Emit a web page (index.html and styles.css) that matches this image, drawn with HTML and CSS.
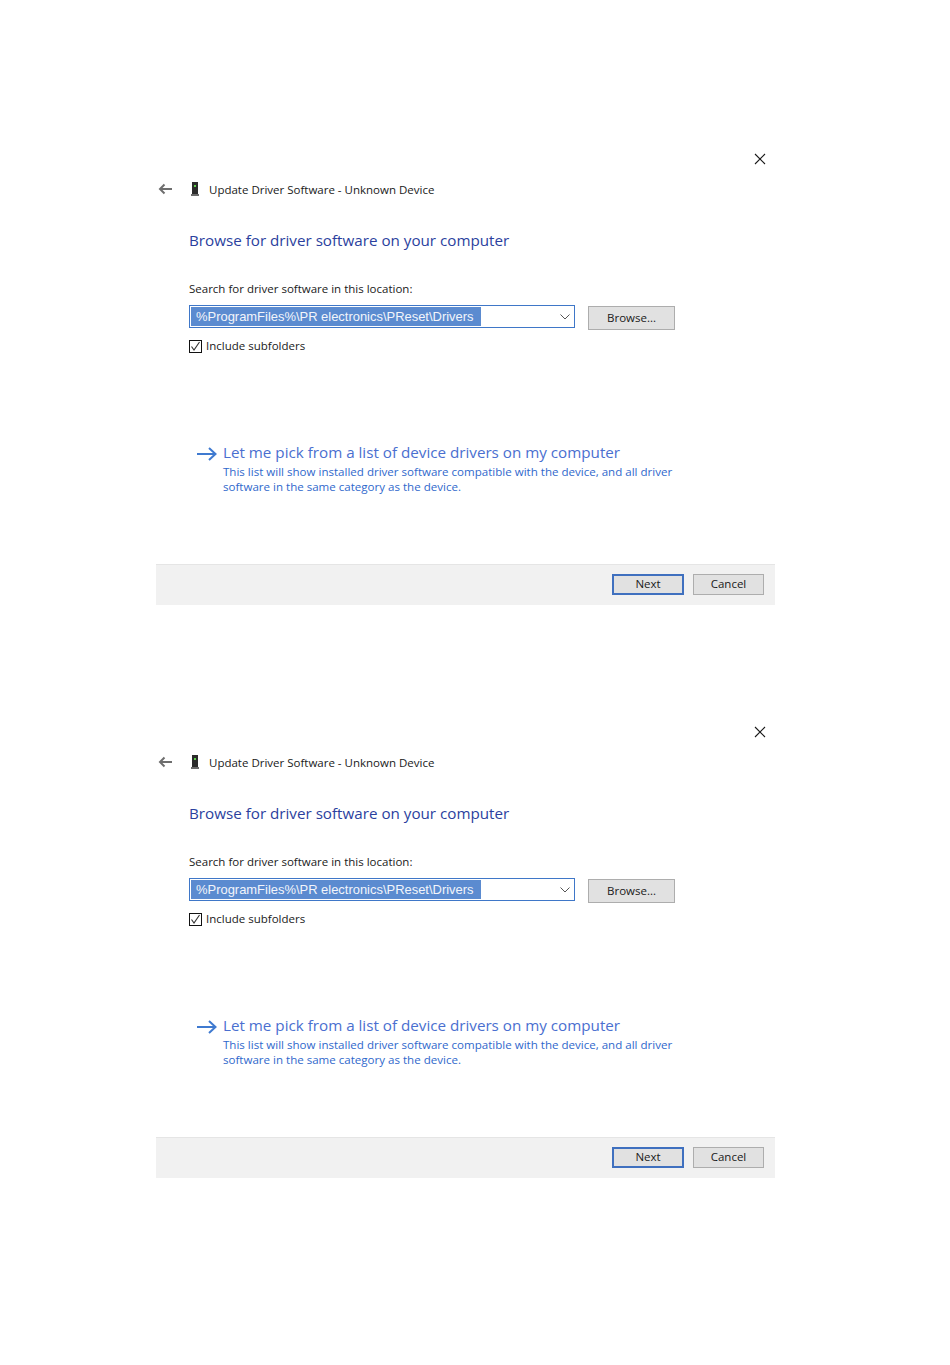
FILE: index.html
```html
<!DOCTYPE html>
<html lang="en">

<head>
    <meta charset="UTF-8">
    <title>Update Driver Software</title>
    <link rel="stylesheet" href="styles.css">
</head>

<body>
    <!-- First dialog -->
    <section class="dialog">
        <div class="close-bar">
            <svg class="close-icon" width="12" height="12" viewBox="0 0 12 12"><path d="M1 1L11 11M11 1L1 11" /></svg>
        </div>
        <div class="title-row">
            <svg class="back-icon" width="14" height="12" viewBox="0 0 14 12"><path d="M14 6H2M6.500 1.500L2 6L6.500 10.500" /></svg>
            <svg class="device-icon" width="8" height="14" viewBox="0 0 8 14">
                <rect x="1" y="0" width="6" height="12" fill="#2b2b2b" />
                <rect x="3" y="3" width="2" height="2" fill="#5fd04a" />
                <rect x="0" y="12" width="8" height="2" fill="#6b6b6b" />
            </svg>
            <span class="title-text">Update Driver Software - Unknown Device</span>
        </div>
        <h1 class="heading">Browse for driver software on your computer</h1>
        <div class="field-label">Search for driver software in this location:</div>
        <div class="field-row">
            <div class="combo">
                <span class="combo-value">%ProgramFiles%\PR electronics\PReset\Drivers</span>
                <svg class="chevron" width="10" height="6" viewBox="0 0 10 6"><path d="M0.5 0.5L5 5L9.5 0.5" /></svg>
            </div>
            <button class="btn browse">Browse...</button>
        </div>
        <label class="check-row">
            <span class="check-box">
                <svg width="11" height="11" viewBox="0 0 11 11"><path d="M1.5 5.5L4 9L9.5 1" /></svg>
            </span>
            Include subfolders
        </label>
        <div class="link-row">
            <svg class="link-arrow" width="20" height="14" viewBox="0 0 20 14"><path d="M0 7H18M12 1L18.500 7L12 13" /></svg>
            <div class="link-body">
                <div class="link-title">Let me pick from a list of device drivers on my computer</div>
                <div class="link-desc">This list will show installed driver software compatible with the device, and all driver software in the same category as the device.</div>
            </div>
        </div>
        <div class="footer">
            <button class="btn next">Next</button>
            <button class="btn cancel">Cancel</button>
        </div>
    </section>

    <!-- Second dialog, same content -->
    <section class="dialog">
        <div class="close-bar">
            <svg class="close-icon" width="12" height="12" viewBox="0 0 12 12"><path d="M1 1L11 11M11 1L1 11" /></svg>
        </div>
        <div class="title-row">
            <svg class="back-icon" width="14" height="12" viewBox="0 0 14 12"><path d="M14 6H2M6.500 1.500L2 6L6.500 10.500" /></svg>
            <svg class="device-icon" width="8" height="14" viewBox="0 0 8 14">
                <rect x="1" y="0" width="6" height="12" fill="#2b2b2b" />
                <rect x="3" y="3" width="2" height="2" fill="#5fd04a" />
                <rect x="0" y="12" width="8" height="2" fill="#6b6b6b" />
            </svg>
            <span class="title-text">Update Driver Software - Unknown Device</span>
        </div>
        <h1 class="heading">Browse for driver software on your computer</h1>
        <div class="field-label">Search for driver software in this location:</div>
        <div class="field-row">
            <div class="combo">
                <span class="combo-value">%ProgramFiles%\PR electronics\PReset\Drivers</span>
                <svg class="chevron" width="10" height="6" viewBox="0 0 10 6"><path d="M0.5 0.5L5 5L9.5 0.5" /></svg>
            </div>
            <button class="btn browse">Browse...</button>
        </div>
        <label class="check-row">
            <span class="check-box">
                <svg width="11" height="11" viewBox="0 0 11 11"><path d="M1.5 5.5L4 9L9.5 1" /></svg>
            </span>
            Include subfolders
        </label>
        <div class="link-row">
            <svg class="link-arrow" width="20" height="14" viewBox="0 0 20 14"><path d="M0 7H18M12 1L18.500 7L12 13" /></svg>
            <div class="link-body">
                <div class="link-title">Let me pick from a list of device drivers on my computer</div>
                <div class="link-desc">This list will show installed driver software compatible with the device, and all driver software in the same category as the device.</div>
            </div>
        </div>
        <div class="footer">
            <button class="btn next">Next</button>
            <button class="btn cancel">Cancel</button>
        </div>
    </section>
</body>

</html>
```

FILE: styles.css
```css
/* General Styles */
body {
    margin: 0;
    padding: 153px 0 0 156px;
    background-color: #ffffff;
    color: #1a1a1a;
    font-family: 'Open Sans', 'Noto Sans', sans-serif;
    font-size: 11.5px;
}

/* Dialog */
.dialog {
    width: 619px;
    height: 452px;
    margin-bottom: 121px;
    display: flex;
    flex-direction: column;
}

.close-bar {
    height: 12px;
    padding-right: 9px;
    display: flex;
    justify-content: flex-end;
}

.close-icon path {
    fill: none;
    stroke: #1a1a1a;
    stroke-width: 1.1;
}

/* Title row */
.title-row {
    height: 16px;
    margin-top: 16px;
    display: flex;
    align-items: center;
    line-height: 16px;
}

.back-icon {
    margin-left: 2px;
}

.back-icon path {
    fill: none;
    stroke: #6e6e6e;
    stroke-width: 2;
}

.device-icon {
    margin-left: 19px;
}

.title-text {
    margin: 1px 0 0 10px;
}

/* Heading */
.heading {
    margin: 32px 0 0 33px;
    font-size: 15.2px;
    font-weight: 400;
    line-height: 22px;
    color: #2b3f9e;
}

/* Location field */
.field-label {
    margin: 30px 0 0 33px;
    line-height: 16px;
}

.field-row {
    margin: 8px 0 0 33px;
    display: flex;
    align-items: flex-start;
}

.combo {
    width: 386px;
    height: 23px;
    box-sizing: border-box;
    border: 1px solid #3f77c8;
    padding: 1px;
    display: flex;
    align-items: center;
    justify-content: space-between;
}

.combo-value {
    width: 290px;
    height: 19px;
    box-sizing: border-box;
    padding-left: 5px;
    background-color: #5b8bd0;
    color: #f2f5fb;
    font-family: 'Liberation Sans', sans-serif;
    font-size: 12.95px;
    line-height: 19px;
    white-space: nowrap;
}

.chevron {
    margin-right: 3px;
}

.chevron path {
    fill: none;
    stroke: #555555;
    stroke-width: 1;
}

/* Buttons */
.btn {
    box-sizing: border-box;
    padding: 0 0 2px;
    border: 1px solid #adadad;
    background-color: #e1e1e1;
    color: #1a1a1a;
    font-family: inherit;
    font-size: 11.5px;
}

.browse {
    width: 87px;
    height: 24px;
    margin: 1px 0 0 13px;
}

/* Checkbox */
.check-row {
    margin: 9px 0 0 33px;
    height: 14px;
    display: flex;
    align-items: center;
    gap: 4px;
    line-height: 14px;
}

.check-box {
    width: 13px;
    height: 13px;
    box-sizing: border-box;
    border: 1px solid #111111;
    display: flex;
    align-items: center;
    justify-content: center;
}

.check-box path {
    fill: none;
    stroke: #333333;
    stroke-width: 1.1;
}

/* Command link */
.link-row {
    margin: 89px 0 0 41px;
    display: flex;
    gap: 6px;
}

.link-arrow {
    margin-top: 5px;
    flex-shrink: 0;
}

.link-arrow path {
    fill: none;
    stroke: #3f7ad0;
    stroke-width: 2;
}

.link-title {
    font-size: 15.2px;
    line-height: 20px;
    margin-bottom: 2px;
    color: #4a6fd0;
    white-space: nowrap;
}

.link-desc {
    width: 455px;
    font-size: 11.55px;
    line-height: 15px;
    color: #2f68cc;
}

/* Footer */
.footer {
    margin-top: auto;
    height: 41px;
    box-sizing: border-box;
    border-top: 1px solid #e5e5e5;
    background-color: #f1f1f1;
    padding: 9px 11px 0 0;
    display: flex;
    justify-content: flex-end;
    align-items: flex-start;
    gap: 9px;
}

.next {
    width: 72px;
    height: 21px;
    border: 2px solid #3f70bf;
}

.cancel {
    width: 71px;
    height: 21px;
}
```
